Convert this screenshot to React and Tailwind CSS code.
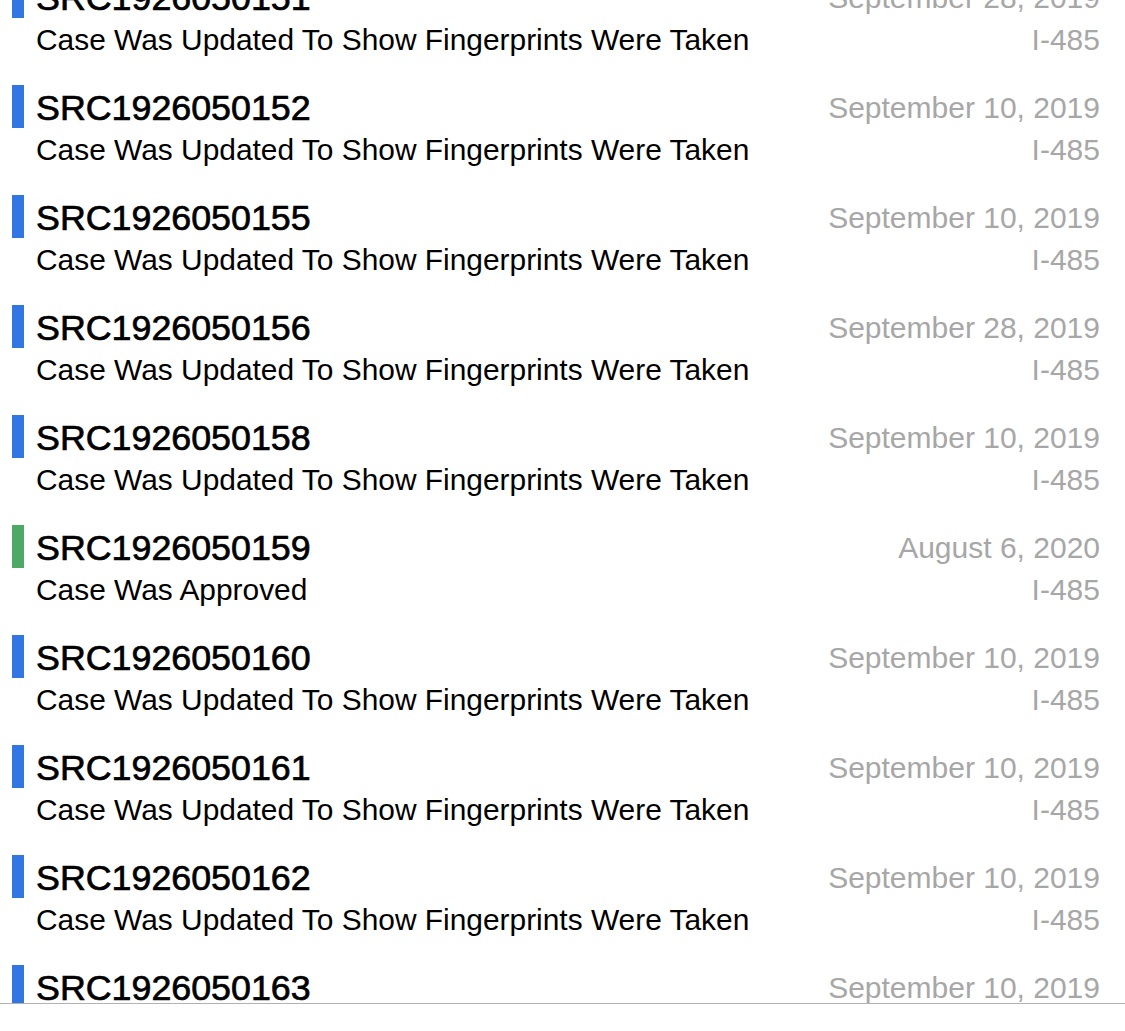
import React from "react";

const rows = [
  { id: "SRC1926050151", status: "Case Was Updated To Show Fingerprints Were Taken", date: "September 28, 2019", color: "blue" },
  { id: "SRC1926050152", status: "Case Was Updated To Show Fingerprints Were Taken", date: "September 10, 2019", color: "blue" },
  { id: "SRC1926050155", status: "Case Was Updated To Show Fingerprints Were Taken", date: "September 10, 2019", color: "blue" },
  { id: "SRC1926050156", status: "Case Was Updated To Show Fingerprints Were Taken", date: "September 28, 2019", color: "blue" },
  { id: "SRC1926050158", status: "Case Was Updated To Show Fingerprints Were Taken", date: "September 10, 2019", color: "blue" },
  { id: "SRC1926050159", status: "Case Was Approved", date: "August 6, 2020", color: "green" },
  { id: "SRC1926050160", status: "Case Was Updated To Show Fingerprints Were Taken", date: "September 10, 2019", color: "blue" },
  { id: "SRC1926050161", status: "Case Was Updated To Show Fingerprints Were Taken", date: "September 10, 2019", color: "blue" },
  { id: "SRC1926050162", status: "Case Was Updated To Show Fingerprints Were Taken", date: "September 10, 2019", color: "blue" },
  { id: "SRC1926050163", status: "Case Was Updated To Show Fingerprints Were Taken", date: "September 10, 2019", color: "blue" },
];

function Row({ r }) {
  return (
    <div className="flex h-[110px] shrink-0 pt-[10px]">
      <div
        className={
          "ml-[12px] h-[43px] w-[12px] shrink-0 " +
          (r.color === "green" ? "bg-[#4ea866]" : "bg-[#3176e2]")
        }
      />
      <div className="ml-[12px] mt-[2px] flex flex-1 flex-col">
        <div className="flex h-[43px] items-center justify-between">
          <span className="text-[35.8px] font-normal leading-none text-black [-webkit-text-stroke:0.7px_#000]">
            {r.id}
          </span>
          <span className="mr-[25px] -mt-[2px] text-[30px] leading-none text-[#a7a7a7]">{r.date}</span>
        </div>
        <div className="flex h-[40px] items-center justify-between">
          <span className="text-[29.9px] leading-none text-black">{r.status}</span>
          <span className="mr-[25px] text-[30px] leading-none text-[#a7a7a7]">I-485</span>
        </div>
      </div>
    </div>
  );
}

export default function App() {
  return (
    <div
      className="flex h-[1031px] w-[1125px] flex-col overflow-hidden bg-white"
      style={{ fontFamily: '"Liberation Sans", Arial, sans-serif' }}
    >
      <div className="h-[1003px] shrink-0 overflow-hidden">
        <div className="-mt-[35px] flex flex-col">
          {rows.map((r) => (
            <Row key={r.id} r={r} />
          ))}
        </div>
      </div>
      <div className="h-[1px] shrink-0 bg-[#b2b2b2]" />
      <div className="flex-1 bg-white" />
    </div>
  );
}
